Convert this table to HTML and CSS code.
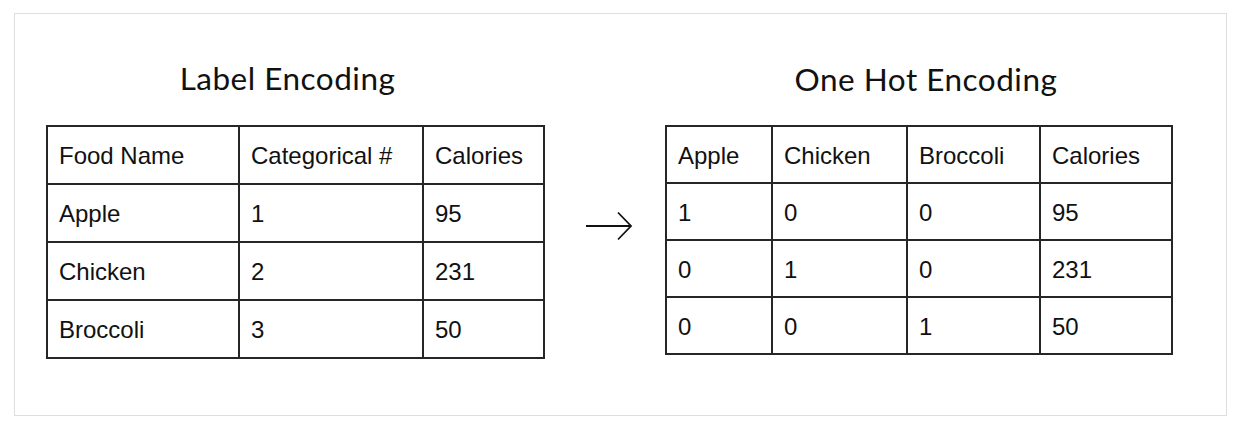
FILE: index.html
```html
<!DOCTYPE html>
<html lang="en">
<head>
<meta charset="utf-8">
<title>Label Encoding vs One Hot Encoding</title>
<link rel="stylesheet" href="styles.css">
</head>
<body>
<div class="frame">
  <section class="panel panel-left">
    <h2 class="title title-left">Label Encoding</h2>
    <table class="grid grid-left">
      <tr><td class="c-name">Food Name</td><td class="c-cat">Categorical #</td><td class="c-cal">Calories</td></tr>
      <tr><td>Apple</td><td>1</td><td>95</td></tr>
      <tr><td>Chicken</td><td>2</td><td>231</td></tr>
      <tr><td>Broccoli</td><td>3</td><td>50</td></tr>
    </table>
  </section>
  <div class="arrow">
    <svg width="48" height="30" viewBox="0 0 48 30" aria-hidden="true">
      <path d="M1 15 H46" stroke="#111" stroke-width="1.8" fill="none"/>
      <path d="M33 1.5 L46 15 L33 28.5" stroke="#111" stroke-width="1.8" fill="none" stroke-linejoin="miter"/>
    </svg>
  </div>
  <section class="panel panel-right">
    <h2 class="title title-right">One Hot Encoding</h2>
    <table class="grid grid-right">
      <tr><td class="c-a">Apple</td><td class="c-b">Chicken</td><td class="c-c">Broccoli</td><td class="c-d">Calories</td></tr>
      <tr><td>1</td><td>0</td><td>0</td><td>95</td></tr>
      <tr><td>0</td><td>1</td><td>0</td><td>231</td></tr>
      <tr><td>0</td><td>0</td><td>1</td><td>50</td></tr>
    </table>
  </section>
</div>
</body>
</html>
```

FILE: styles.css
```css
html, body {
  margin: 0;
  padding: 0;
  background: #ffffff;
}

.frame {
  box-sizing: border-box;
  margin: 13px 0 0 14px;
  width: 1213px;
  height: 403px;
  border: 1px solid #dedede;
  display: flex;
  align-items: flex-start;
  padding: 46px 0 0 31px;
}

.panel {
  display: flex;
  flex-direction: column;
  align-items: stretch;
}

.panel-left { width: 499px; }
.panel-right { width: 508px; }

.title {
  margin: 0;
  font-family: "Lato", "Open Sans", sans-serif;
  font-weight: 400;
  font-size: 31.5px;
  line-height: 36px;
  color: #111;
  text-align: center;
  letter-spacing: 0.5px;
}

.title-left { padding-right: 16px; margin-bottom: 29px; }
.title-right { padding-left: 14px; margin-top: 1px; margin-bottom: 28px; }

.grid {
  border-collapse: collapse;
  font-family: "Liberation Sans", Arial, sans-serif;
  font-size: 24px;
  color: #111;
  table-layout: fixed;
}

.grid td {
  box-sizing: border-box;
  border: 2px solid #262626;
  padding: 2px 0 0 11px;
  vertical-align: middle;
  white-space: nowrap;
}

.grid-left { width: 499px; }
.grid-left td { height: 58px; }
.grid-left .c-name { width: 192px; }
.grid-left .c-cat { width: 184px; }

.grid-right { width: 508px; }
.grid-right td { height: 57px; }
.grid-right .c-a { width: 106px; }
.grid-right .c-b { width: 135px; }
.grid-right .c-c { width: 133px; }

.arrow {
  margin: 151px 32px 0 40px;
  width: 48px;
  height: 30px;
  display: flex;
}
```
